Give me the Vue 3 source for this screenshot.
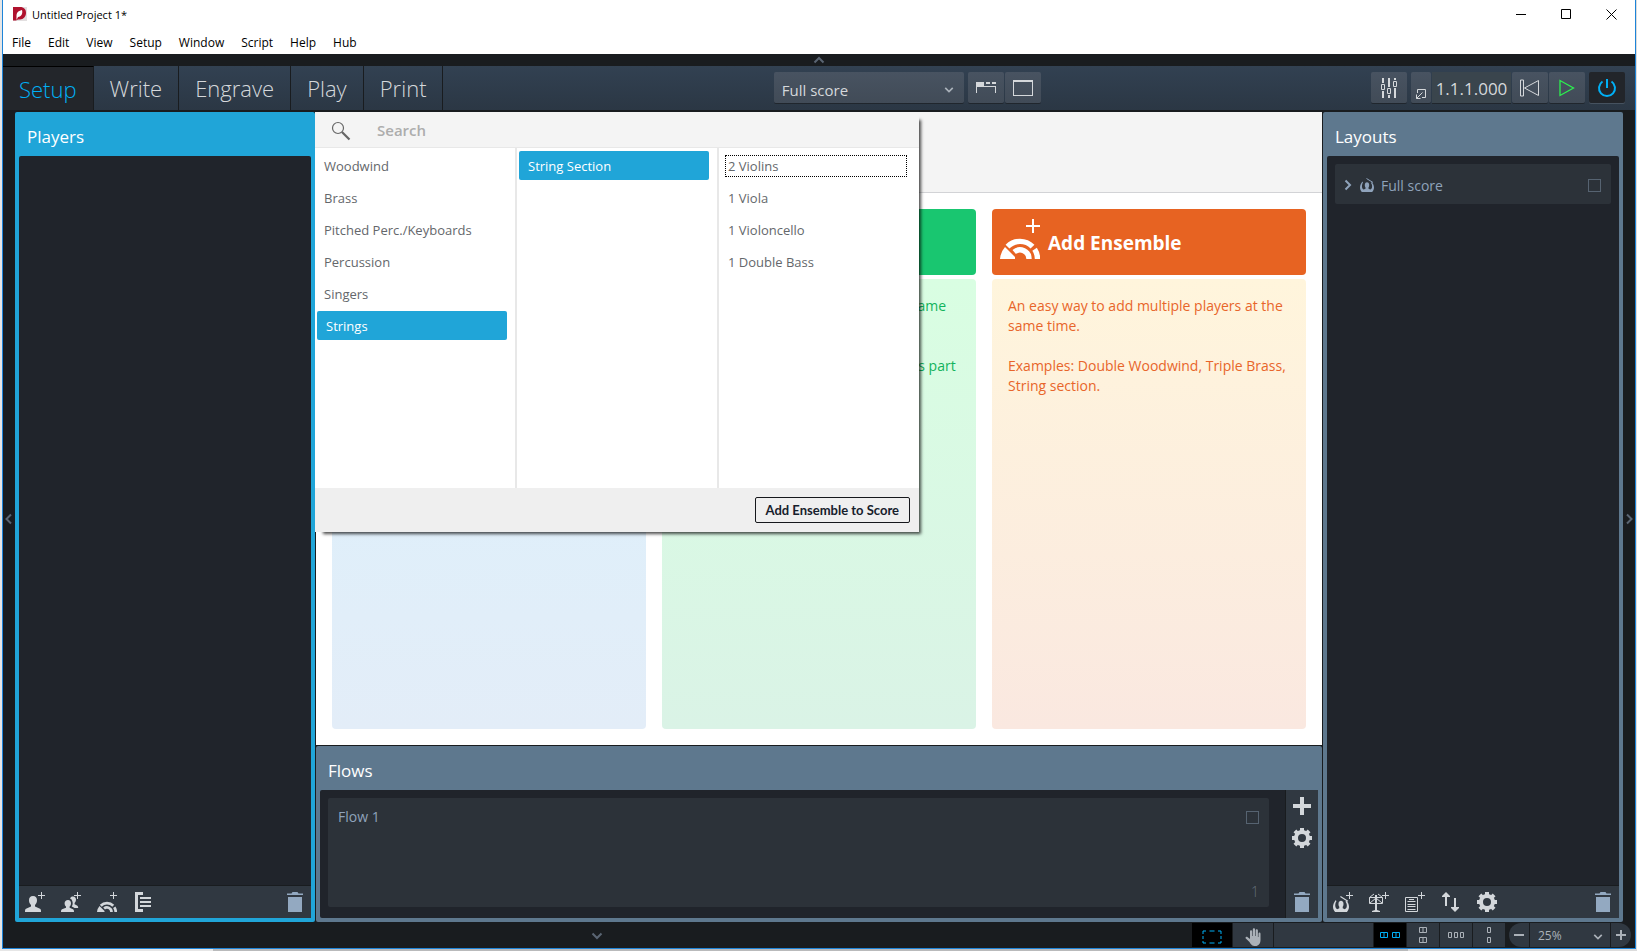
<template>
  <!-- Shared icon shapes -->
  <svg class="icon-defs" aria-hidden="true">
    <symbol id="i-ensemble" viewBox="0 0 40 40">
      <path d="M26 6h6V0h2v6h6v2h-6v6h-2V8h-6z" />
      <path d="M0 40A20 20 0 0 1 5 28L15 38V40Z" />
      <path d="M7.5 27.6A17.5 17.5 0 0 1 32.5 27.6M34.6 30.3A17.5 17.5 0 0 1 37.5 40M14.2 33A9 9 0 0 1 29 40" fill="none" stroke="currentColor" stroke-width="5.4" />
    </symbol>
    <symbol id="i-player" viewBox="0 0 20 20">
      <path d="M16 0h1v3h3v1h-3v3h-1V4h-3V3h3z" />
      <path d="M8 4c2.800 0 4 1.800 4 4.300 0 2-.8 3.500-2 4.700v1.500l5 2.300c1 .5 1 1.700 1 3.200H0c0-1.500 0-2.700 1-3.200l5-2.300V13c-1.200-1.200-2-2.700-2-4.700C4 5.800 5.200 4 8 4z" />
    </symbol>
    <symbol id="i-section" viewBox="0 0 20 20">
      <path d="M16 0h1v3h3v1h-3v3h-1V4h-3V3h3z" />
      <path d="M7 8c2.100 0 3 1.400 3 3.200 0 1.500-.6 2.500-1.400 3.400v1.200l3.400 1.500c.8.400 1 1.300 1 2.700H0c0-1.400.2-2.300 1-2.700l4-1.500v-1.200c-.8-.9-1.400-1.900-1.400-3.400C3.600 9.400 4.900 8 7 8z" />
      <path d="M9 6.500C9.500 5 10.500 4.400 12 4.400c2 0 3 1.300 3 3.200 0 1.500-.6 2.600-1.400 3.400v1.200l2.400 1.200c.9.500 1.200 1.200 1.200 2.600h-3.600l-2.700-1.500v-.4c.8-1.200.9-2.400.7-3.800C11.300 8.300 10.500 7 9 6.500z" />
    </symbol>
    <symbol id="i-trash" viewBox="0 0 16 20">
      <path d="M0 1.500h4.500L5.500 0h5l1 1.500H16V3H0zM1 5h14v15H1z" />
    </symbol>
    <symbol id="i-gear" viewBox="0 0 20 20">
      <circle cx="10" cy="10" r="6" fill="none" stroke="currentColor" stroke-width="4" />
      <path d="M8 0h4v4H8zM8 16h4v4H8zM0 8h4v4H0zM16 8h4v4h-4zM1.500 4.300l2.800-2.800 3 3-2.800 2.800zM15.700 1.500l2.800 2.800-3 3-2.800-2.800zM4.500 12.700l2.800 2.800-3 3-2.800-2.800zM15.500 12.700l3 3-2.800 2.800-3-3z" />
    </symbol>
    <symbol id="i-score" viewBox="0 0 14 14">
      <path d="M2.500 3.500C.8 5.500 0 7.500 0 9.500c0 1.700.7 3.200 1.800 4.500h10.400c1.100-1.300 1.800-2.800 1.800-4.500 0-2.200-1-4-2.500-5.500l-.5 1c1 1.300 1.300 2.700 1 4.500-.3 1.200-.9 1.800-1.700 2l-1.800-.8V9.500C9.200 8.600 9.300 7.300 9.100 6.200 8.900 5 8.200 4.200 7 4.200S5.100 5 4.900 6.200C4.700 7.300 4.800 8.600 5.500 9.500v1.200l-1.800.8c-.8-.2-1.400-.9-1.600-2C1.800 7.700 2 6 3 4.500z" />
      <path d="M6.500.5l6.500 4" fill="none" stroke="currentColor" />
    </symbol>
    <symbol id="i-down" viewBox="0 0 12 8"><path d="M1.500 1.500L6 6l4.500-4.500" fill="none" stroke="currentColor" stroke-width="2" /></symbol>
  </svg>

  <div class="desktop">
    <div class="window">
      <header class="title-bar">
        <svg class="logo" viewBox="0 0 14 14">
          <rect width="14" height="14" fill="#e2dfe0" />
          <path d="M0 0h7c4 0 6 2.500 6 6s-2.500 6.500-6 6.500H5L3 13.500H0z" fill="#b0122e" />
          <path d="M3.500 13V9c0-3 1.200-5 5.500-6 1 3.500-.5 6.500-4 7z" fill="#fff" />
        </svg>
        <h1>Untitled Project 1*</h1>
        <div class="window-buttons">
          <button aria-label="Minimize"><svg viewBox="0 0 11 11"><path d="M0 5.500h10" /></svg></button>
          <button aria-label="Maximize"><svg viewBox="0 0 11 11"><path d="M.5.5h9v9h-9z" /></svg></button>
          <button aria-label="Close"><svg viewBox="0 0 11 11"><path d="M.5.500l10 10M10.500.500l-10 10" /></svg></button>
        </div>
      </header>

      <nav class="menu-bar">
        <button v-for="menu in menus" :key="menu">{{ menu }}</button>
      </nav>

      <button class="strip-top" aria-label="Hide toolbar">
        <svg class="chev flip"><use href="#i-down" /></svg>
      </button>

      <div class="toolbar">
        <div class="modes">
          <button v-for="m in modes" :key="m" :class="{ active: m === mode }" @click="mode = m">{{ m }}</button>
        </div>

        <div class="view-tools">
          <div class="select-wrap layout-select">
            <select aria-label="Layout"><option>Full score</option></select>
            <svg class="chev"><use href="#i-down" /></svg>
          </div>
          <div class="group">
            <button class="tool" aria-label="Show tabs">
              <svg width="20" height="14" viewBox="0 0 20 14"><path d="M0 1h8v4h12v7h-1V6H1v6H0zM10 1h4v2h-4zM16 1h4v2h-4z" /></svg>
            </button>
            <button class="tool" aria-label="Single view">
              <svg width="20" height="16" viewBox="0 0 20 16"><path d="M0 0h20v16H0zM1 2v13h18V2z" fill-rule="evenodd" /></svg>
            </button>
          </div>
        </div>

        <div class="transport">
          <button class="tool" aria-label="Mixer">
            <svg width="16" height="20" viewBox="0 0 16 20">
              <path d="M1 0h2v5H1zM1 13h2v7H1zM7 0h2v9H7zM7 17h2v3H7zM13 0h2v2h-2zM13 10h2v10h-2z" />
              <path d="M.5 6.500h3v5h-3zM6.500 10.500h3v5h-3zM12.500 3.500h3v5h-3z" fill="none" stroke="currentColor" />
            </svg>
          </button>
          <div class="group">
            <button class="tool small" aria-label="Show transport window">
              <svg width="12" height="12" viewBox="0 0 12 12"><path d="M2.500 5V1.500h8v8H7M7.500 4.500l-6 6M1.500 6.500v4h4" fill="none" stroke="currentColor" /></svg>
            </button>
            <div class="timecode">1.1.1.000</div>
            <button class="tool" aria-label="Rewind">
              <svg width="20" height="18" viewBox="0 0 20 18"><path d="M.5 1h3v16h-3zM18.500 1.500v15L4.500 9z" fill="none" stroke="currentColor" /></svg>
            </button>
            <button class="tool play" aria-label="Play">
              <svg width="16" height="18" viewBox="0 0 16 18"><path d="M1 1.500v15L14.500 9z" fill="none" stroke="currentColor" stroke-width="1.300" /></svg>
            </button>
          </div>
          <button class="tool power" aria-label="Activate project">
            <svg width="20" height="20" viewBox="0 0 20 20"><path d="M10 1v9M5.500 3.500a8 8 0 1 0 9 0" fill="none" stroke="currentColor" stroke-width="2" /></svg>
          </button>
        </div>
      </div>

      <main class="workspace">
        <button class="strip-side" aria-label="Hide players">
          <svg class="chev-side" viewBox="0 0 8 12"><path d="M6 1.500L1.500 6 6 10.500" /></svg>
        </button>

        <section class="panel players">
          <h2>Players</h2>
          <div class="panel-body"></div>
          <div class="panel-tools">
            <button aria-label="Add solo player"><svg class="i20"><use href="#i-player" /></svg></button>
            <button aria-label="Add section player"><svg class="i20"><use href="#i-section" /></svg></button>
            <button aria-label="Add ensemble"><svg class="i20"><use href="#i-ensemble" /></svg></button>
            <button aria-label="Add group">
              <svg class="i20" viewBox="0 0 20 20"><path d="M2 0h8v3H5v14h5v3H2zM7 5h11v2H7zM7 9h11v2H7zM7 13h11v2H7z" /></svg>
            </button>
            <button class="trash" aria-label="Delete player"><svg><use href="#i-trash" /></svg></button>
          </div>
        </section>

        <div class="center">
          <section class="start-area">
            <div class="start-band"></div>
            <div class="cards">
              <article v-for="card in cards" :key="card.title" class="card" :class="card.kind">
                <button class="card-title">
                  <svg><use :href="card.icon" /></svg>
                  <span>{{ card.title }}</span>
                </button>
                <div class="card-text">
                  <p v-for="line in card.text" :key="line">{{ line }}</p>
                </div>
              </article>
            </div>

            <div class="picker">
              <label class="search">
                <svg viewBox="0 0 20 20"><circle cx="7" cy="7" r="5.500" /><path d="M11 11l7.500 7.500" stroke-width="2.200" /></svg>
                <input type="text" placeholder="Search" aria-label="Search ensembles" />
              </label>
              <div class="columns">
                <ul>
                  <li v-for="f in families" :key="f">
                    <button :class="{ selected: f === family }" @click="family = f">{{ f }}</button>
                  </li>
                </ul>
                <ul>
                  <li><button class="selected">String Section</button></li>
                </ul>
                <ul>
                  <li v-for="(p, i) in parts" :key="p">
                    <button :class="{ focused: i === 0 }"><span>{{ p }}</span></button>
                  </li>
                </ul>
              </div>
              <footer><button>Add Ensemble to Score</button></footer>
            </div>
          </section>

          <section class="panel flows">
            <h2>Flows</h2>
            <div class="flows-row">
              <div class="flow-list">
                <div class="flow-card">
                  <label for="flow-1">Flow 1</label>
                  <input id="flow-1" type="checkbox" />
                  <span class="flow-number">1</span>
                </div>
              </div>
              <div class="flow-tools">
                <button aria-label="Add flow"><svg viewBox="0 0 18 18"><path d="M7 0h4v7h7v4h-7v7H7v-7H0V7h7z" /></svg></button>
                <button aria-label="Layout options"><svg class="i20"><use href="#i-gear" /></svg></button>
                <button class="trash" aria-label="Delete flow"><svg><use href="#i-trash" /></svg></button>
              </div>
            </div>
          </section>
        </div>

        <section class="panel layouts">
          <h2>Layouts</h2>
          <div class="panel-body">
            <div class="layout-card">
              <svg class="expander" viewBox="0 0 8 12"><path d="M1.500 1.500L6 6l-4.500 4.500" /></svg>
              <svg class="score-icon"><use href="#i-score" /></svg>
              <label for="layout-1">Full score</label>
              <input id="layout-1" type="checkbox" />
            </div>
          </div>
          <div class="panel-tools">
            <button aria-label="Add full score layout">
              <svg class="i20" viewBox="0 0 20 20"><path d="M16 0h1v3h3v1h-3v3h-1V4h-3V3h3z" /><svg y="4" width="16" height="16"><use href="#i-score" /></svg></svg>
            </button>
            <button aria-label="Add instrumental part layout">
              <svg class="i20" viewBox="0 0 20 20">
                <path d="M16 0h1v3h3v1h-3v3h-1V4h-3V3h3z" />
                <path d="M.5 5.500h13v6H.5zM.5 5.500L5 2M9 2l4.500 3.500M1 11l6-5 6 5" fill="none" stroke="currentColor" />
                <path d="M6 3h2v15l3 1v1H3v-1l3-1z" />
              </svg>
            </button>
            <button aria-label="Add custom score layout">
              <svg class="i20" viewBox="0 0 20 20">
                <path d="M16 0h1v3h3v1h-3v3h-1V4h-3V3h3z" />
                <path d="M.5 5.500h12v14H.5zM4 7.500h5M2.500 9.500h8M2.500 12.500h8M2.500 14.500h8M2.500 17.500h8" fill="none" stroke="currentColor" />
              </svg>
            </button>
            <button aria-label="Sort layouts">
              <svg class="i20" viewBox="0 0 20 20"><path d="M5 0l4 4v1H6v9H4V5H1V4zM13 6h2v9h3v1l-4 4-4-4v-1h3z" /></svg>
            </button>
            <button aria-label="Layout options"><svg class="i20"><use href="#i-gear" /></svg></button>
            <button class="trash" aria-label="Delete layout"><svg><use href="#i-trash" /></svg></button>
          </div>
        </section>

        <button class="strip-side" aria-label="Hide layouts">
          <svg class="chev-side" viewBox="0 0 8 12"><path d="M2 1.500L6.500 6 2 10.500" /></svg>
        </button>
      </main>

      <footer class="status-bar">
        <button class="strip-bottom" aria-label="Hide flows"><svg class="chev"><use href="#i-down" /></svg></button>
        <button class="cell wide on" aria-label="Marquee tool">
          <svg width="20" height="14" viewBox="0 0 20 14"><path d="M1 4V1h3M7.500 1h5M16 1h3v3M19 6v3M19 11v2h-3M12.500 13h-5M4 13H1v-2M1 9V6" /></svg>
        </button>
        <button class="cell wide" aria-label="Hand tool">
          <svg class="hand" width="17" height="18" viewBox="0 0 17 18">
            <path d="M5 11V3.500c0-1.600 2-1.600 2.200 0V8h.6V1.500c0-1.700 2.200-1.700 2.300 0V8h.6V2.500c0-1.600 2.100-1.600 2.200 0V9h.6V5.500c.2-1.500 2-1.300 2 .2V12c0 3.500-2 6-5 6-3.500 0-4.500-1.500-6-4L.8 10.500c-.9-1.500.7-2.300 1.900-1.200z" />
          </svg>
        </button>
        <div class="cell spacer"></div>
        <button class="cell on" aria-label="Spreads horizontally">
          <svg width="20" height="7" viewBox="0 0 20 7"><path d="M.5.500h7v5h-7zM4 .5v5M12.500.500h7v5h-7zM16 .5v5" /></svg>
        </button>
        <button class="cell" aria-label="Spreads vertically">
          <svg width="8" height="16" viewBox="0 0 8 16"><path d="M.5.500h7v5h-7zM4 .5v5M.5 10.500h7v5h-7zM4 10.500v5" /></svg>
        </button>
        <button class="cell" aria-label="Single pages horizontally">
          <svg width="16" height="7" viewBox="0 0 16 7"><path d="M.5.500h3v5h-3zM6.500.500h3v5h-3zM12.500.500h3v5h-3z" /></svg>
        </button>
        <button class="cell" aria-label="Single pages vertically">
          <svg width="4" height="16" viewBox="0 0 4 16"><path d="M.5.500h3v5h-3zM.5 10.500h3v5h-3z" /></svg>
        </button>
        <div class="zoom">
          <button class="cell end-left" aria-label="Zoom out"><svg width="10" height="10" viewBox="0 0 10 10"><path d="M0 5h10" stroke-width="2" /></svg></button>
          <div class="select-wrap zoom-select">
            <select aria-label="Zoom"><option>25%</option></select>
            <svg class="chev"><use href="#i-down" /></svg>
          </div>
          <button class="cell end-right" aria-label="Zoom in"><svg width="10" height="10" viewBox="0 0 10 10"><path d="M0 5h10M5 0v10" stroke-width="2" /></svg></button>
        </div>
      </footer>
    </div>
  </div>
</template>

<script setup>
  import { ref } from 'vue';

  const menus = ['File', 'Edit', 'View', 'Setup', 'Window', 'Script', 'Help', 'Hub'];
  const modes = ['Setup', 'Write', 'Engrave', 'Play', 'Print'];
  const mode = ref('Setup');

  const families = ['Woodwind', 'Brass', 'Pitched Perc./Keyboards', 'Percussion', 'Singers', 'Strings'];
  const family = ref('Strings');
  const parts = ['2 Violins', '1 Viola', '1 Violoncello', '1 Double Bass'];

  const cards = [
    {
      kind: 'blue',
      icon: '#i-player',
      title: 'Add Single Player',
      text: ['An individual player.', 'Examples: Flute, Clarinet in A.']
    },
    {
      kind: 'green',
      icon: '#i-section',
      title: 'Add Section Player',
      text: ['Multiple players, who each play the same instrument.', 'Examples: Violin 1 + 2, Soprano voices part of a choir.']
    },
    {
      kind: 'orange',
      icon: '#i-ensemble',
      title: 'Add Ensemble',
      text: ['An easy way to add multiple players at the same time.', 'Examples: Double Woodwind, Triple Brass, String section.']
    }
  ];
</script>

<style>
  html, body {
    margin: 0;
  }
</style>

<style scoped>
  * {
    box-sizing: border-box;
  }

  h1, h2, p, ul {
    margin: 0;
    padding: 0;
    font-weight: 400;
  }

  ul {
    list-style: none;
  }

  button, select, input {
    margin: 0;
    padding: 0;
    border: 0;
    border-radius: 0;
    background: none;
    color: inherit;
    font: inherit;
  }

  svg {
    display: block;
    flex-shrink: 0;
    fill: currentColor;
  }

  .icon-defs {
    position: absolute;
    width: 0;
    height: 0;
  }

  /* --- Window frame --- */
  .desktop {
    height: 100vh;
    min-height: 600px;
    padding: 0 1px 2px 2px;
    background: linear-gradient(90deg, #e6e6e6 13%, #b9babb 13%, #b9babb 86%, #dcdcdc 86%);
    font-family: "Open Sans", "Noto Sans", sans-serif;
    font-size: 13px;
  }

  .window {
    display: flex;
    flex-direction: column;
    height: 100%;
    border: 1px solid #1e84d8;
    border-top: 0;
    background: #191c1f;
  }

  .title-bar {
    display: flex;
    align-items: center;
    height: 28px;
    padding: 0 1px 0 10px;
    background: #fff;
  }

  .logo {
    width: 14px;
    height: 14px;
    margin-right: 5px;
  }

  .title-bar h1 {
    font-size: 11px;
    color: #000;
  }

  .window-buttons {
    display: flex;
    margin-left: auto;
  }

  .window-buttons button {
    display: grid;
    place-items: center;
    width: 45px;
    height: 28px;
  }

  .window-buttons svg {
    width: 11px;
    height: 11px;
    fill: none;
    stroke: #000;
  }

  .menu-bar {
    display: flex;
    gap: 17px;
    height: 26px;
    padding: 2px 0 0 9px;
    background: #fff;
    font-size: 12px;
    color: #000;
  }

  .strip-top {
    display: grid;
    place-items: center;
    height: 12px;
    color: #5a6573;
  }

  .chev {
    width: 12px;
    height: 8px;
  }

  .flip {
    transform: rotate(180deg);
  }

  /* --- Toolbar --- */
  .toolbar {
    display: flex;
    justify-content: space-between;
    height: 44px;
    margin-bottom: 2px;
    background: linear-gradient(#324152, #2b3744);
    color: #d5d8db;
  }

  .modes {
    display: flex;
  }

  .modes button {
    padding: 0 16px;
    border-right: 1px solid #191c1f;
    font-size: 22px;
    font-weight: 300;
    line-height: 44px;
  }

  .modes .active {
    border-top: 1px solid #000;
    background: #23262b;
    color: #00b0f6;
  }

  .view-tools, .transport {
    display: flex;
    gap: 4px;
    padding-top: 6px;
  }

  .transport {
    padding-right: 10px;
  }

  .group {
    display: flex;
    gap: 1px;
  }

  .tool, .timecode, .layout-select {
    height: 31px;
    background: linear-gradient(#485361, #414b57);
    box-shadow: 0 1px 0 #20262d;
  }

  .tool {
    display: grid;
    place-items: center;
    width: 36px;
    border-radius: 2px;
  }

  .small {
    width: 20px;
    padding-top: 12px;
  }

  .timecode {
    width: 79px;
    background: #3a454d;
    font-size: 17px;
    line-height: 33px;
    text-align: center;
  }

  .play {
    color: #2cf04f;
  }

  .power {
    background: #22252a;
    color: #00b0f6;
    box-shadow: 0 1px 0 #46525f;
  }

  .select-wrap {
    display: grid;
    align-items: center;
    border-radius: 2px;
  }

  .select-wrap select, .select-wrap svg {
    grid-area: 1 / 1;
  }

  .select-wrap select {
    width: 100%;
    height: 100%;
    appearance: none;
    outline: none;
  }

  .select-wrap svg {
    justify-self: end;
    width: 10px;
    pointer-events: none;
  }

  .layout-select {
    width: 190px;
    font-size: 15px;
  }

  .layout-select select {
    padding: 5px 8px 0;
  }

  .layout-select svg {
    margin: 4px 10px 0 0;
    color: #aab2ba;
  }

  /* --- Workspace --- */
  .workspace {
    display: grid;
    grid-template-columns: 12px 300px minmax(0, 1fr) 300px 12px;
    flex: 1;
    min-height: 0;
  }

  .strip-side {
    display: grid;
    place-items: center;
    padding-top: 4px;
    color: #5a6573;
  }

  .chev-side, .expander {
    width: 8px;
    height: 12px;
    fill: none;
    stroke: currentColor;
    stroke-width: 2;
  }

  .panel {
    display: flex;
    flex-direction: column;
    padding: 0 4px 4px;
    border-radius: 2px;
    background: #5e788e;
  }

  .panel h2 {
    height: 44px;
    padding: 5px 8px 0;
    font-size: 17px;
    line-height: 40px;
    color: #fff;
  }

  .players {
    background: #20a5d8;
  }

  .panel-body {
    flex: 1;
    padding: 8px;
    border-radius: 2px 2px 0 0;
    background: #20242b;
  }

  .panel-tools {
    display: flex;
    align-items: center;
    gap: 16px;
    height: 33px;
    padding: 0 8px 0 6px;
    border-top: 1px solid #191c1f;
    background: #303841;
    color: #d3d7db;
  }

  .i20 {
    width: 20px;
    height: 20px;
  }

  .trash {
    margin-left: auto;
    color: #93a9c1;
  }

  .trash svg {
    width: 16px;
    height: 20px;
  }

  input[type="checkbox"] {
    width: 13px;
    height: 13px;
    margin-left: auto;
    border: 1px solid #566371;
    appearance: none;
  }

  .layout-card {
    display: flex;
    align-items: center;
    height: 40px;
    padding: 2px 10px 0 9px;
    border-radius: 2px;
    background: #2c3239;
    color: #8fa3bb;
    font-size: 14px;
  }

  .score-icon {
    width: 14px;
    height: 14px;
    margin: 0 7px 0 8px;
  }

  /* --- Start area --- */
  .center {
    display: flex;
    flex-direction: column;
    min-width: 0;
    margin: 0 1px;
  }

  .start-area {
    position: relative;
    display: flex;
    flex: 1;
    flex-direction: column;
    min-height: 0;
    margin-bottom: 1px;
    background: #fff;
  }

  .start-band {
    height: 81px;
    border-bottom: 1px solid #d2d3d6;
    background: #f4f4f4;
  }

  .cards {
    display: grid;
    grid-template-columns: repeat(3, minmax(0, 1fr));
    flex: 1;
    gap: 16px;
    padding: 16px;
  }

  .card {
    display: flex;
    flex-direction: column;
    gap: 4px;
  }

  .card-title {
    display: flex;
    align-items: center;
    gap: 8px;
    height: 66px;
    padding: 0 8px;
    border-radius: 4px;
    color: #fff;
    font-size: 19px;
    font-weight: 700;
  }

  .card-title svg {
    width: 40px;
    height: 40px;
    margin-bottom: 6px;
  }

  .card-title span {
    padding-top: 2px;
  }

  .card-text {
    display: flex;
    flex: 1;
    flex-direction: column;
    gap: 20px;
    padding: 17px 16px;
    border-radius: 4px;
    font-size: 14px;
    line-height: 20px;
  }

  .blue .card-title { background: #1f8fd8; }
  .blue .card-text { background: linear-gradient(#dbf1fc, #e3edf8); color: #1f8fd8; }
  .green .card-title { background: #19c670; }
  .green .card-text { background: linear-gradient(#d9fee2, #daf3e6); color: #12b35c; }
  .orange .card-title { background: #e76322; }
  .orange .card-text { background: linear-gradient(#fff5dc, #fae8e0); color: #e8652a; }

  /* --- Ensemble picker, floating above the cards --- */
  .picker {
    position: absolute;
    top: 0;
    left: -1px;
    display: flex;
    flex-direction: column;
    width: 604px;
    height: 420px;
    background: #fff;
    box-shadow: 5px 5px 3px -3px rgba(0, 0, 0, 0.7);
    color: #64676b;
  }

  .search {
    display: flex;
    align-items: center;
    gap: 26px;
    height: 36px;
    padding-left: 16px;
    border-bottom: 1px solid #e8e8e8;
    background: #f4f4f4;
  }

  .search svg {
    width: 20px;
    height: 20px;
    margin-top: 3px;
    fill: none;
    stroke: #666;
    stroke-width: 1.200;
  }

  .search input {
    flex: 1;
    font-size: 15px;
    font-weight: 600;
    outline: none;
  }

  .search input::placeholder {
    color: #adadad;
    opacity: 1;
  }

  .columns {
    display: grid;
    grid-template-columns: 202px 202px 1fr;
    flex: 1;
  }

  .columns ul {
    padding: 3px 8px 0 2px;
  }

  .columns ul + ul {
    border-left: 2px solid #e8e8e8;
    padding-left: 2px;
    margin-left: -2px;
  }

  .columns li {
    height: 32px;
  }

  .columns button {
    display: block;
    width: 190px;
    height: 29px;
    padding: 1px 7px 0;
    border-radius: 2px;
    line-height: 29px;
    text-align: left;
  }

  .columns .selected {
    padding-left: 9px;
    background: #20a5d8;
    color: #fff;
  }

  .columns .focused {
    display: flex;
    align-items: center;
    padding: 0 4px;
  }

  .columns .focused span {
    flex: 1;
    padding-left: 2px;
    border: 1px dotted #000;
    line-height: 20px;
  }

  .picker footer {
    display: flex;
    align-items: center;
    justify-content: flex-end;
    height: 44px;
    padding-right: 9px;
    background: #efefef;
  }

  .picker footer button {
    height: 26px;
    padding: 0 10px;
    border: 1px solid #16181c;
    border-radius: 2px;
    color: #16202c;
    font-family: Lato, sans-serif;
    font-size: 13px;
    font-weight: 700;
  }

  /* --- Flows --- */
  .flows-row {
    display: flex;
    height: 128px;
  }

  .flow-list {
    flex: 1;
    padding: 8px 16px 11px 8px;
    border-radius: 2px 0 0 2px;
    background: #20242b;
  }

  .flow-card {
    display: grid;
    grid-template-columns: 1fr auto;
    align-content: space-between;
    height: 109px;
    padding: 9px 10px 6px;
    border-radius: 2px;
    background: #2c3239;
    color: #8fa3bb;
    font-size: 14px;
  }

  .flow-card input[type="checkbox"] {
    margin-top: 4px;
  }

  .flow-number {
    grid-column: 2;
    justify-self: end;
    color: #66717d;
    font-weight: 300;
  }

  .flow-tools {
    display: flex;
    flex-direction: column;
    align-items: center;
    gap: 13px;
    width: 33px;
    padding: 7px 0 6px;
    border-left: 1px solid #191c1f;
    background: #303841;
    color: #d3d7db;
  }

  .flow-tools > button:first-child svg {
    width: 18px;
    height: 18px;
  }

  .flow-tools .trash {
    margin: auto 0 0;
  }

  /* --- Status bar --- */
  .status-bar {
    display: flex;
    gap: 1px;
    height: 26px;
    padding: 1px 4px 1px 0;
    color: #abb1b8;
  }

  .strip-bottom {
    display: grid;
    flex: 1;
    place-items: center;
    padding-top: 2px;
    color: #5a6573;
  }

  .cell {
    display: grid;
    place-items: center;
    width: 32px;
    background: #303841;
  }

  .cell svg {
    fill: none;
    stroke: currentColor;
  }

  .cell .hand {
    fill: currentColor;
    stroke: none;
  }

  .wide {
    width: 40px;
    padding-top: 4px;
  }

  .spacer {
    width: 99px;
  }

  .on {
    background: #000;
    color: #00b0f6;
  }

  .zoom {
    display: flex;
    gap: 1px;
    margin-left: 3px;
  }

  .end-left {
    width: 20px;
    border-radius: 12px 0 0 12px;
  }

  .end-right {
    width: 20px;
    border-radius: 0 12px 12px 0;
  }

  .zoom-select {
    width: 80px;
    border-radius: 0;
    background: #303841;
    font-size: 12px;
  }

  .zoom-select select {
    padding: 0 8px;
  }

  .zoom-select svg {
    margin: 3px 7px 0 0;
  }
</style>
